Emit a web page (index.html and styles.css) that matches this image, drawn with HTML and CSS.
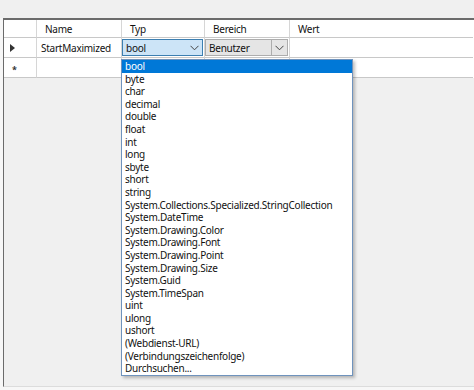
FILE: index.html
```html
<!DOCTYPE html>
<html lang="de">
<head>
    <meta charset="UTF-8">
    <title>Einstellungen</title>
    <link rel="stylesheet" href="styles.css">
</head>
<body>
    <div class="top-strip"></div>
    <div class="grid-frame">
        <div class="grid">
            <div class="cell row-head head"></div>
            <div class="cell head">Name</div>
            <div class="cell head">Typ</div>
            <div class="cell head">Bereich</div>
            <div class="cell head">Wert</div>

            <div class="cell row-head"><span class="arrow"></span></div>
            <div class="cell">StartMaximized</div>
            <div class="cell edit">
                <div class="combo active">
                    <span class="combo-text">bool</span>
                    <span class="combo-btn">
                        <svg width="9" height="6" viewBox="0 0 9 6"><path d="M0.5 0.8 L4.5 4.8 L8.5 0.8" fill="none" stroke="#444" stroke-width="1"/></svg>
                    </span>
                </div>
            </div>
            <div class="cell edit">
                <div class="combo">
                    <span class="combo-text">Benutzer</span>
                    <span class="combo-btn split">
                        <svg width="9" height="6" viewBox="0 0 9 6"><path d="M0.5 0.8 L4.5 4.8 L8.5 0.8" fill="none" stroke="#444" stroke-width="1"/></svg>
                    </span>
                </div>
            </div>
            <div class="cell"></div>

            <div class="cell row-head"><span class="star">*</span></div>
            <div class="cell"></div>
            <div class="cell"></div>
            <div class="cell"></div>
            <div class="cell"></div>
        </div>

        <!-- open list of the Typ combo -->
        <ul class="dropdown">
            <li class="selected">bool</li>
            <li>byte</li>
            <li>char</li>
            <li>decimal</li>
            <li>double</li>
            <li>float</li>
            <li>int</li>
            <li>long</li>
            <li>sbyte</li>
            <li>short</li>
            <li>string</li>
            <li>System.Collections.Specialized.StringCollection</li>
            <li>System.DateTime</li>
            <li>System.Drawing.Color</li>
            <li>System.Drawing.Font</li>
            <li>System.Drawing.Point</li>
            <li>System.Drawing.Size</li>
            <li>System.Guid</li>
            <li>System.TimeSpan</li>
            <li>uint</li>
            <li>ulong</li>
            <li>ushort</li>
            <li>(Webdienst-URL)</li>
            <li>(Verbindungszeichenfolge)</li>
            <li>Durchsuchen...</li>
        </ul>
    </div>
</body>
</html>
```

FILE: styles.css
```css
body {
    margin: 0;
    background-color: #f7f7f7;
    font-family: "Noto Sans", "Open Sans", sans-serif;
    font-size: 10px;
    letter-spacing: -0.25px;
    color: #111;
    width: 474px;
    height: 390px;
    overflow: hidden;
}
.top-strip {
    height: 18px;
    background-color: #f0f0f0;
}
.grid-frame {
    position: relative;
    margin-left: 3px;
    height: 366px;
    border-left: 1px solid #6b6b6b;
    border-top: 2px solid #6b6b6b;
    border-bottom: 1px solid #dcdcdc;
    background-color: #f0f0f0;
}
.grid {
    display: grid;
    grid-template-columns: 33px 85px 83px 85px 183px;
    grid-template-rows: 18px 20px 20px;
    background-color: #fff;
}
.cell {
    border-right: 1px solid #d6d6d6;
    border-bottom: 1px solid #c8c8c8;
    padding-left: 4px;
    display: flex;
    align-items: center;
    white-space: nowrap;
    overflow: hidden;
}
.cell.head {
    padding-left: 8px;
}
.cell:nth-child(5n) {
    border-right: none;
}
.row-head {
    padding-left: 6px;
}
.arrow {
    width: 0;
    height: 0;
    border-top: 4px solid transparent;
    border-bottom: 4px solid transparent;
    border-left: 5px solid #333;
}
.star {
    font-size: 9px;
    font-weight: bold;
    color: #333;
    padding-left: 2px;
    padding-top: 3px;
}
.cell.edit {
    padding: 1px 1px 1px 0;
}
.combo {
    display: flex;
    width: 100%;
    height: 100%;
    box-sizing: border-box;
    border: 1px solid #adadad;
    background-color: #e5e5e5;
    align-items: center;
}
.combo.active {
    border-color: #3c7fb1;
    background-color: #cce4f7;
}
.combo-text {
    flex: 1;
    padding-left: 3px;
}
.combo-btn {
    width: 15px;
    height: 100%;
    display: flex;
    align-items: center;
    justify-content: center;
}
.combo-btn.split {
    border-left: 1px solid #adadad;
}
.dropdown {
    position: absolute;
    left: 117px;
    top: 39px;
    width: 230px;
    margin: 0;
    padding: 0;
    list-style: none;
    background-color: #fff;
    border: 1px solid #6f93bd;
    box-shadow: 2px 2px 3px rgba(0, 0, 0, 0.25);
}
.dropdown li {
    height: 12.6px;
    line-height: 12.6px;
    padding-left: 3px;
    white-space: nowrap;
}
.dropdown li.selected {
    background-color: #0078d7;
    color: #fff;
}
```
